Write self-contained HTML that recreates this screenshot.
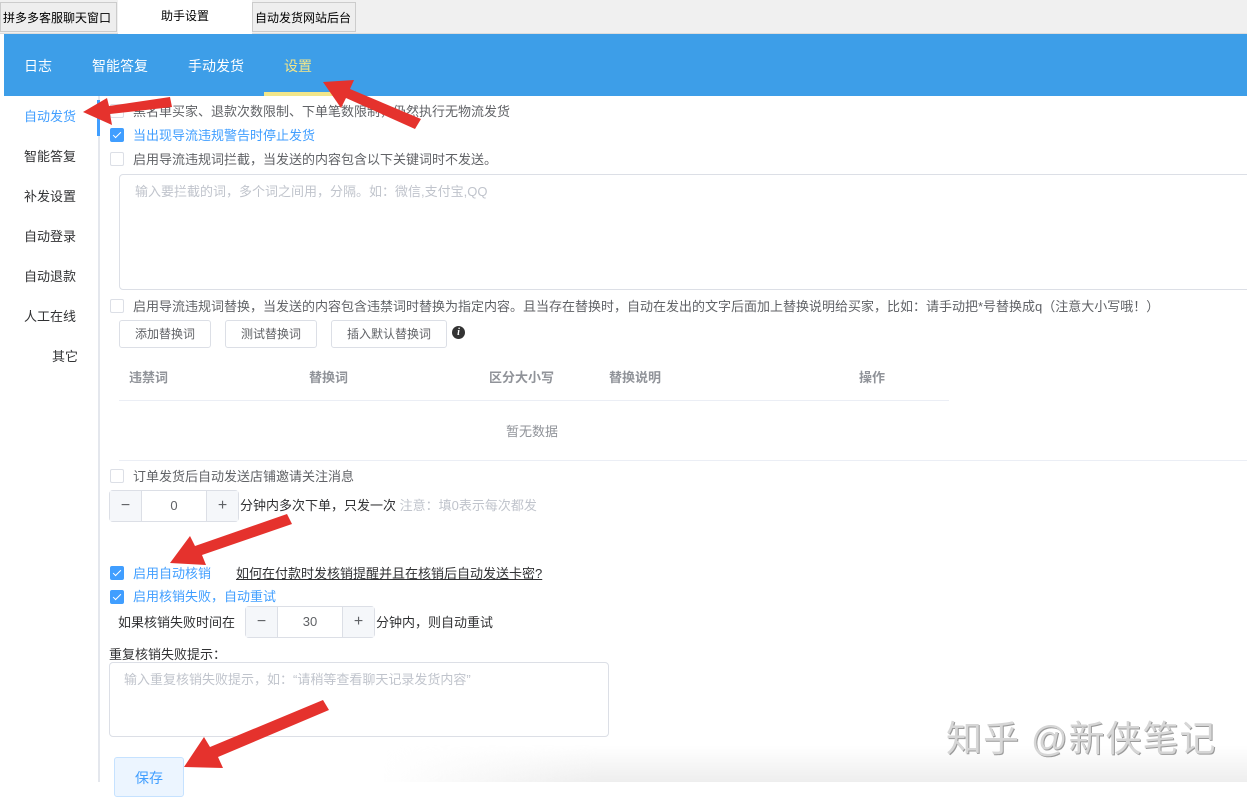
<!DOCTYPE html>
<html><head><meta charset="utf-8"><style>
*{box-sizing:border-box;margin:0;padding:0}
body{width:1247px;height:782px;overflow:hidden;background:#fff;font-family:"Liberation Sans","Noto Sans CJK SC",sans-serif;font-size:13px;color:#606266;position:relative}
.abs{position:absolute}
.tabs{left:0;top:0;width:1247px;height:34px;background:#f0f0f0;border-bottom:1px solid #ddd}
.tab{position:absolute;top:2px;height:30px;line-height:30px;font-size:12px;color:#000;border:1px solid #ccc;background:#eee;padding:0 2px;white-space:nowrap;overflow:hidden}
.hdr{left:4px;top:34px;width:1243px;height:62px;background:#3d9ee8}
.hdr span{position:absolute;top:22px;color:#fff;font-size:14px}
.side{left:0;top:96px;width:100px;height:686px;border-right:2px solid #e4e7ed}
.side div{position:absolute;font-size:13px;color:#303133;transform:translateY(-2px)}
.cb{position:absolute;width:14px;height:14px;border:1px solid #dcdfe6;border-radius:2px;background:#fff}
.cb.on{background:#409eff;border-color:#409eff}
.cb.on:after{content:"";position:absolute;left:4px;top:1px;width:3px;height:7px;border:solid #fff;border-width:0 1px 1px 0;transform:rotate(45deg)}
.t{position:absolute;white-space:nowrap;font-size:13px;transform:translateY(-2px)}
.blue{color:#409eff}
.btn{position:absolute;height:28px;border:1px solid #dcdfe6;border-radius:3px;font-size:12px;color:#606266;text-align:center;line-height:26px;background:#fff}
.num{position:absolute;height:32px;border:1px solid #dcdfe6;border-radius:4px;background:#fff}
.num .m,.num .p{position:absolute;top:0;width:32px;height:30px;background:#f5f7fa;text-align:center;line-height:30px;color:#606266;font-size:16px}
.num .m{left:0;border-right:1px solid #dcdfe6}
.num .p{right:0;border-left:1px solid #dcdfe6}
.num .v{position:absolute;left:32px;right:32px;top:0;line-height:30px;text-align:center;color:#606266}
.ta{position:absolute;border:1px solid #dcdfe6;border-radius:4px;background:#fff}
.ph{color:#c0c4cc}
</style></head><body>
<div class="abs tabs">
 <div class="tab" style="left:0;width:117px">拼多多客服聊天窗口</div>
 <div class="tab" style="left:118px;width:134px;background:#fff;border-color:#fff;text-align:center;top:0;height:34px;line-height:30px">助手设置</div>
 <div class="tab" style="left:252px;width:104px">自动发货网站后台</div>
</div>
<div class="abs hdr">
 <span style="left:20px">日志</span><span style="left:88px">智能答复</span><span style="left:184px">手动发货</span><span style="left:280px;color:#f2e68a">设置</span>
 <div class="abs" style="left:260px;top:58px;width:75px;height:4px;background:#f2e68a"></div>
</div>
<div class="abs side">
 <div style="left:24px;top:12px;color:#409eff">自动发货</div>
 <div style="left:24px;top:52px">智能答复</div>
 <div style="left:24px;top:92px">补发设置</div>
 <div style="left:24px;top:132px">自动登录</div>
 <div style="left:24px;top:172px">自动退款</div>
 <div style="left:24px;top:212px">人工在线</div>
 <div style="left:52px;top:252px">其它</div>
 <div class="abs" style="left:97px;top:4px;width:3px;height:36px;background:#409eff;transform:none"></div>
</div>

<div class="cb" style="left:110px;top:104px"></div><div class="t" style="left:133px;top:103px">黑名单买家、退款次数限制、下单笔数限制，仍然执行无物流发货</div>
<div class="cb on" style="left:110px;top:128px"></div><div class="t blue" style="left:133px;top:127px">当出现导流违规警告时停止发货</div>
<div class="cb" style="left:110px;top:152px"></div><div class="t" style="left:133px;top:151px">启用导流违规词拦截，当发送的内容包含以下关键词时不发送。</div>
<div class="ta" style="left:119px;top:174px;width:1140px;height:116px"><div class="t ph" style="left:15px;top:8px">输入要拦截的词，多个词之间用，分隔。如：微信,支付宝,QQ</div></div>
<div class="cb" style="left:110px;top:299px"></div><div class="t" style="left:133px;top:298px">启用导流违规词替换，当发送的内容包含违禁词时替换为指定内容。且当存在替换时，自动在发出的文字后面加上替换说明给买家，比如：请手动把*号替换成q（注意大小写哦！）</div>
<div class="btn" style="left:119px;top:320px;width:92px">添加替换词</div>
<div class="btn" style="left:225px;top:320px;width:92px">测试替换词</div>
<div class="btn" style="left:331px;top:320px;width:116px">插入默认替换词</div>
<div class="abs" style="left:452px;top:326px;width:13px;height:13px;border-radius:50%;background:#333;color:#fff;font-size:10px;line-height:13px;text-align:center;font-style:italic;font-weight:bold;font-family:'Liberation Serif',serif">i</div>
<div class="t" style="left:129px;top:369px;color:#909399;font-weight:bold">违禁词</div>
<div class="t" style="left:309px;top:369px;color:#909399;font-weight:bold">替换词</div>
<div class="t" style="left:489px;top:369px;color:#909399;font-weight:bold">区分大小写</div>
<div class="t" style="left:609px;top:369px;color:#909399;font-weight:bold">替换说明</div>
<div class="t" style="left:859px;top:369px;color:#909399;font-weight:bold">操作</div>
<div class="abs" style="left:119px;top:400px;width:830px;height:1px;background:#ebeef5"></div>
<div class="t" style="left:506px;top:423px;color:#909399">暂无数据</div>
<div class="abs" style="left:119px;top:460px;width:1128px;height:1px;background:#ebeef5"></div>
<div class="cb" style="left:110px;top:469px"></div><div class="t" style="left:133px;top:468px">订单发货后自动发送店铺邀请关注消息</div>
<div class="num" style="left:109px;top:490px;width:130px"><div class="m">−</div><div class="v">0</div><div class="p">+</div></div>
<div class="t" style="left:240px;top:497px;color:#303133">分钟内多次下单，只发一次 <span class="ph">注意：填0表示每次都发</span></div>
<div class="cb on" style="left:110px;top:566px"></div><div class="t blue" style="left:133px;top:565px">启用自动核销</div>
<div class="t" style="left:236px;top:565px;color:#303133;text-decoration:underline">如何在付款时发核销提醒并且在核销后自动发送卡密?</div>
<div class="cb on" style="left:110px;top:590px"></div><div class="t blue" style="left:133px;top:588px">启用核销失败，自动重试</div>
<div class="t" style="left:118px;top:614px;color:#303133">如果核销失败时间在</div>
<div class="num" style="left:245px;top:606px;width:130px"><div class="m">−</div><div class="v">30</div><div class="p">+</div></div>
<div class="t" style="left:376px;top:614px;color:#303133">分钟内，则自动重试</div>
<div class="t" style="left:109px;top:646px;color:#303133">重复核销失败提示：</div>
<div class="ta" style="left:109px;top:662px;width:500px;height:75px"><div class="t ph" style="left:14px;top:8px">输入重复核销失败提示，如：“请稍等查看聊天记录发货内容”</div></div>
<div class="abs" style="left:114px;top:757px;width:70px;height:40px;border:1px solid #c6e2ff;background:#ecf5ff;border-radius:3px;color:#409eff;text-align:center;line-height:40px;font-size:14px">保存</div>

<div class="abs" style="left:380px;top:745px;width:867px;height:37px;background:linear-gradient(90deg,rgba(240,240,240,0) 0%,rgba(238,238,238,1) 25%,#eeeeee 100%);-webkit-mask-image:linear-gradient(180deg,transparent 0%,#000 100%);mask-image:linear-gradient(180deg,transparent 0%,#000 100%)"></div>
<div class="abs" style="left:946px;top:710px;font-size:36px;letter-spacing:1px;color:#d6d6d6;text-shadow:1px 1px 0 #9a9a9a;white-space:nowrap">知乎 @新侠笔记</div>

<svg class="abs" style="left:0;top:0" width="1247" height="782">
 <g fill="#e5322d">
  <polygon points="170,97 172,107 110,114 112,125 83,112 107,98 109,106"/>
  <polygon points="421,119 415,129 346,98 341,108 323,82 354,80 350,89"/>
  <polygon points="287,514 292,524 202,555 206,565 170,563 190,536 195,546"/>
  <polygon points="323,700 329,710 218,757 223,768 184,767 204,737 210,747"/>
 </g>
</svg>
</body></html>
